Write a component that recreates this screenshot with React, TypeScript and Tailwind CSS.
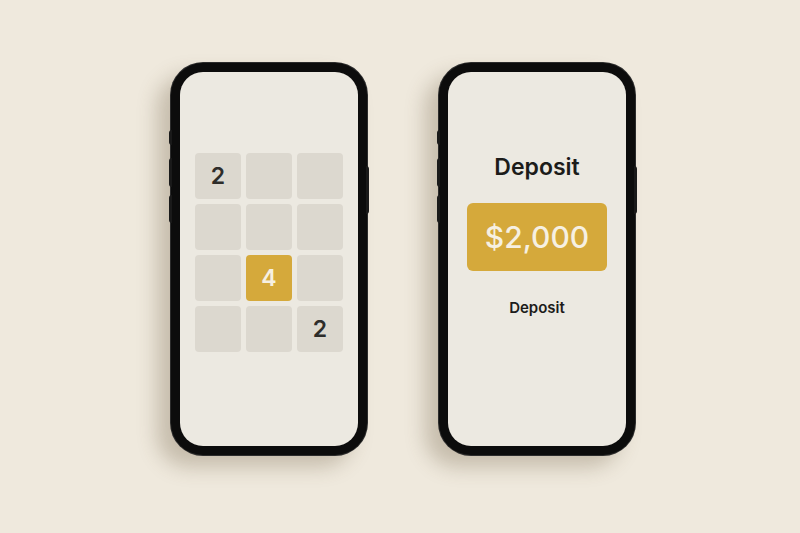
import React from "react";

type Tile = { value?: number; gold?: boolean };

const board: Tile[] = [
  { value: 2 }, {}, {},
  {}, {}, {},
  {}, { value: 4, gold: true }, {},
  {}, {}, { value: 2 },
];

function Phone({ children }: { children: React.ReactNode }) {
  return (
    <div className="relative w-[196px] h-[392px] rounded-[32px] bg-[#0c0c0c] p-[9px] shadow-[-14px_12px_20px_rgba(95,75,45,0.28)] ring-1 ring-[#2c2c2c]">
      {/* side buttons */}
      <span className="absolute left-[-2px] top-[67px] h-[15px] w-[3px] rounded-l bg-[#1a1a1a]" />
      <span className="absolute left-[-2px] top-[95px] h-[29px] w-[3px] rounded-l bg-[#1a1a1a]" />
      <span className="absolute left-[-2px] top-[132px] h-[28px] w-[3px] rounded-l bg-[#1a1a1a]" />
      <span className="absolute right-[-2px] top-[103px] h-[48px] w-[3px] rounded-r bg-[#1a1a1a]" />
      <div className="h-full w-full rounded-[23px] bg-[#ece9e1] overflow-hidden">
        {children}
      </div>
    </div>
  );
}

export default function App() {
  return (
    <div
      className="w-[800px] h-[533px] bg-[#efe9dd] flex justify-center gap-[72px] pt-[63px] pl-[6px]"
      style={{ fontFamily: "Inter, 'Open Sans', sans-serif" }}
    >
      <Phone>
        <div className="flex justify-center pt-[81px]">
          <div className="grid grid-cols-3 gap-[5px]">
            {board.map((tile, i) => (
              <div
                key={i}
                className={
                  tile.gold
                    ? "w-[46px] h-[46px] rounded-[4px] bg-[#d5a93b] flex items-center justify-center text-[23px] font-semibold text-[#f6f0e2]"
                    : "w-[46px] h-[46px] rounded-[4px] bg-[#dcd8cf] flex items-center justify-center text-[23px] font-semibold text-[#2e2d2a]"
                }
              >
                {tile.value}
              </div>
            ))}
          </div>
        </div>
      </Phone>

      <Phone>
        <div className="flex flex-col items-center pt-[81px]">
          <h1 className="text-[23px] leading-[29px] font-semibold text-[#1c1c1a]">Deposit</h1>
          <div className="mt-[21px] w-[140px] h-[68px] rounded-[6px] bg-[#d5a93b] flex items-center justify-center text-[30px] font-medium text-[#f6f0e2]">
            $2,000
          </div>
          <p className="mt-[27px] text-[15px] leading-[20px] font-semibold text-[#1c1c1a]">Deposit</p>
        </div>
      </Phone>
    </div>
  );
}
